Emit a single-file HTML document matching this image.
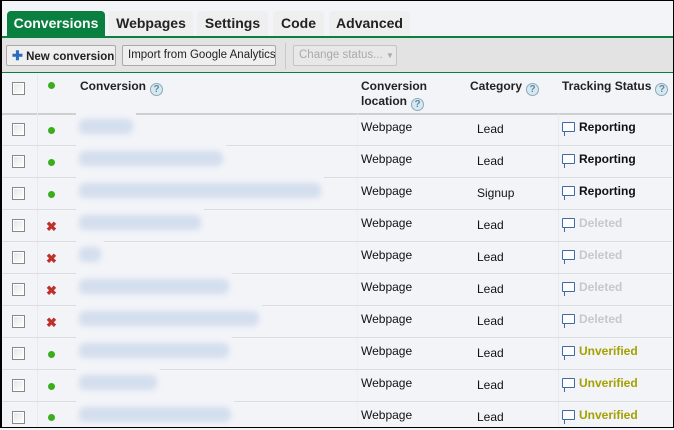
<!DOCTYPE html>
<html><head><meta charset="utf-8"><style>
*{margin:0;padding:0;box-sizing:border-box}
body{width:674px;height:428px;overflow:hidden;background:#f3f4f8;font-family:"Liberation Sans",Arial,sans-serif;font-size:12px;color:#111;position:relative}
.frame{position:absolute;left:0;top:0;width:674px;height:428px;border:1px solid #000;border-width:1px 1px 1px 2px;pointer-events:none;z-index:10}
.tab{position:absolute;top:11px;height:25px;background:#efefef;border-radius:4px 4px 0 0;font-weight:bold;font-size:14px;line-height:25px;text-align:center;color:#222}
.tab.on{background:#0a8040;color:#fff}
.gl{position:absolute;left:0;width:674px;background:#0a8040}
.tb{position:absolute;left:0;top:38px;width:674px;height:35px;background:#e3e3e3}
.btn{position:absolute;top:45px;height:21px;border:1px solid #a9a9a9;background:#efefef;font-size:12px;line-height:19px;padding:0 5px;color:#222;border-radius:2px;white-space:nowrap;overflow:hidden}
.hd{position:absolute;font-weight:bold;font-size:12px;color:#222;line-height:15px;white-space:nowrap}
.q{display:inline-block;width:13px;height:13px;border:1px solid #8ab;border-radius:50%;background:#d9e8f0;color:#5a8aa6;font-size:10px;line-height:11px;text-align:center;vertical-align:-2px;margin-left:4px;font-weight:bold}
.cb{position:absolute;left:12px;width:13px;height:13px;border:1px solid #888;background:linear-gradient(135deg,#e6e6e6,#fff);box-shadow:inset 0 0 0 1px #fff}
.dot{position:absolute;left:48px;width:7px;height:7px;border-radius:50%;background:#3cad1c}
.x{position:absolute;left:46px;color:#c0302a;font-weight:bold;font-size:13px;line-height:13px}
.line{position:absolute;left:0;width:672px;height:1px;background:#dcdde0}
.blob{position:absolute;left:76px;height:30px;background:#f3f4f8}
.blob i{position:absolute;left:3px;top:7px;bottom:8px;right:3px;background:#d3deee;filter:blur(3px);border-radius:6px}
.t{position:absolute;font-size:12px;color:#111}
.st{position:absolute;left:562px;font-weight:bold;font-size:12px}
.st b{display:inline-block;width:13px;height:10px;border:1.5px solid #3c6aa8;border-radius:1px;background:#fff;margin-right:4px;vertical-align:-1px;position:relative}
.st b:after{content:"";position:absolute;left:1px;bottom:-5px;width:3px;height:4px;border-left:1.5px solid #3c6aa8}
.rep{color:#111}.del{color:#c8c8c8}.unv{color:#a3a000}
</style></head><body>
<div class="tab on" style="left:7px;width:98px">Conversions</div>
<div class="tab" style="left:109px;width:84px">Webpages</div>
<div class="tab" style="left:197px;width:71px">Settings</div>
<div class="tab" style="left:273px;width:51px">Code</div>
<div class="tab" style="left:329px;width:81px">Advanced</div>
<div class="gl" style="top:36px;height:2px"></div>
<div class="tb"></div>
<div class="gl" style="top:72px;height:1px"></div>
<div class="btn" style="left:6px;width:110px;font-weight:bold;font-size:11.5px"><span style="color:#2a6cc0;font-size:13px">✚</span> New conversion</div>
<div class="btn" style="left:122px;width:154px;font-size:11.5px">Import from Google Analytics</div>
<div style="position:absolute;left:285px;top:43px;width:1px;height:26px;background:#c8c8c8"></div>
<div class="btn" style="left:293px;width:104px;color:#aaa;background:#e8e8e8;border-color:#c4c4c4;font-size:11.5px">Change status... <span style="font-size:8px">▼</span></div>
<div class="cb" style="top:82px"></div>
<div class="dot" style="top:82px"></div>
<div class="hd" style="left:80px;top:79px">Conversion<span class="q">?</span></div>
<div class="hd" style="left:361px;top:79px">Conversion<br>location<span class="q">?</span></div>
<div class="hd" style="left:470px;top:79px">Category<span class="q">?</span></div>
<div class="hd" style="left:562px;top:79px">Tracking Status<span class="q">?</span></div>
<div class="line" style="top:113px;height:2px;background:#cfcfcf"></div>
<div style="position:absolute;left:37px;top:74px;width:1px;height:354px;background:#e9eaee"></div>
<div style="position:absolute;left:357px;top:114px;width:1px;height:314px;background:#eeeff2"></div>
<div style="position:absolute;left:558px;top:114px;width:1px;height:314px;background:#e9eaee"></div>

<div class="line" style="top:145px"></div><div class="line" style="top:177px"></div><div class="line" style="top:209px"></div><div class="line" style="top:241px"></div><div class="line" style="top:273px"></div><div class="line" style="top:305px"></div><div class="line" style="top:337px"></div><div class="line" style="top:369px"></div><div class="line" style="top:401px"></div>

<div class="cb" style="top:123px"></div><div class="dot" style="top:127px"></div><div class="blob" style="top:112px;width:60px"><i></i></div><div class="t" style="left:361px;top:120px">Webpage</div><div class="t" style="left:477px;top:122px">Lead</div><div class="st rep" style="top:120px"><b></b>Reporting</div>
<div class="cb" style="top:155px"></div><div class="dot" style="top:159px"></div><div class="blob" style="top:144px;width:150px"><i></i></div><div class="t" style="left:361px;top:152px">Webpage</div><div class="t" style="left:477px;top:154px">Lead</div><div class="st rep" style="top:152px"><b></b>Reporting</div>
<div class="cb" style="top:187px"></div><div class="dot" style="top:191px"></div><div class="blob" style="top:176px;width:248px"><i></i></div><div class="t" style="left:361px;top:184px">Webpage</div><div class="t" style="left:477px;top:186px">Signup</div><div class="st rep" style="top:184px"><b></b>Reporting</div>
<div class="cb" style="top:219px"></div><div class="x" style="top:220px">✖</div><div class="blob" style="top:208px;width:128px"><i></i></div><div class="t" style="left:361px;top:216px">Webpage</div><div class="t" style="left:477px;top:218px">Lead</div><div class="st del" style="top:216px"><b></b>Deleted</div>
<div class="cb" style="top:251px"></div><div class="x" style="top:252px">✖</div><div class="blob" style="top:240px;width:28px"><i></i></div><div class="t" style="left:361px;top:248px">Webpage</div><div class="t" style="left:477px;top:250px">Lead</div><div class="st del" style="top:248px"><b></b>Deleted</div>
<div class="cb" style="top:283px"></div><div class="x" style="top:284px">✖</div><div class="blob" style="top:272px;width:156px"><i></i></div><div class="t" style="left:361px;top:280px">Webpage</div><div class="t" style="left:477px;top:282px">Lead</div><div class="st del" style="top:280px"><b></b>Deleted</div>
<div class="cb" style="top:315px"></div><div class="x" style="top:316px">✖</div><div class="blob" style="top:304px;width:186px"><i></i></div><div class="t" style="left:361px;top:312px">Webpage</div><div class="t" style="left:477px;top:314px">Lead</div><div class="st del" style="top:312px"><b></b>Deleted</div>
<div class="cb" style="top:347px"></div><div class="dot" style="top:351px"></div><div class="blob" style="top:336px;width:156px"><i></i></div><div class="t" style="left:361px;top:344px">Webpage</div><div class="t" style="left:477px;top:346px">Lead</div><div class="st unv" style="top:344px"><b></b>Unverified</div>
<div class="cb" style="top:379px"></div><div class="dot" style="top:383px"></div><div class="blob" style="top:368px;width:84px"><i></i></div><div class="t" style="left:361px;top:376px">Webpage</div><div class="t" style="left:477px;top:378px">Lead</div><div class="st unv" style="top:376px"><b></b>Unverified</div>
<div class="cb" style="top:411px"></div><div class="dot" style="top:414px"></div><div class="blob" style="top:400px;width:158px"><i></i></div><div class="t" style="left:361px;top:408px">Webpage</div><div class="t" style="left:477px;top:410px">Lead</div><div class="st unv" style="top:408px"><b></b>Unverified</div>
<div class="frame"></div>
</body></html>
